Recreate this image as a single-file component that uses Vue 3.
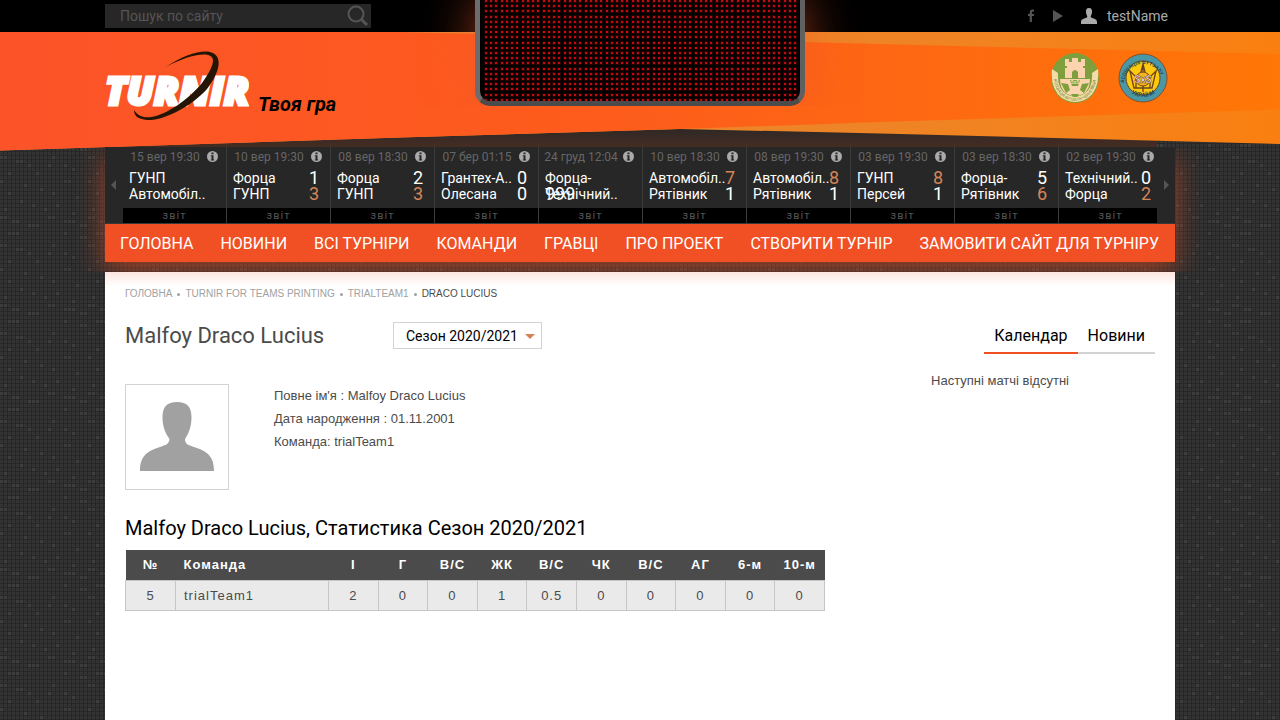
<script setup>
import { ref } from 'vue'

const query = ref('')
const season = ref('Сезон 2020/2021')

const games = [
  { date: '15 вер 19:30', home: 'ГУНП', away: 'Автомобіл..', hs: '', as: '' },
  { date: '10 вер 19:30', home: 'Форца', away: 'ГУНП', hs: '1', as: '3', win: 'away' },
  { date: '08 вер 18:30', home: 'Форца', away: 'ГУНП', hs: '2', as: '3', win: 'away' },
  { date: '07 бер 01:15', home: 'Грантех-А..', away: 'Олесана', hs: '0', as: '0' },
  { date: '24 груд 12:04', home: 'Форца-', away: 'Технічний..', hs: '', as: '999', wide: true },
  { date: '10 вер 18:30', home: 'Автомобіл..', away: 'Рятівник', hs: '7', as: '1', win: 'home' },
  { date: '08 вер 19:30', home: 'Автомобіл..', away: 'Рятівник', hs: '8', as: '1', win: 'home' },
  { date: '03 вер 19:30', home: 'ГУНП', away: 'Персей', hs: '8', as: '1', win: 'home' },
  { date: '03 вер 18:30', home: 'Форца-', away: 'Рятівник', hs: '5', as: '6', win: 'away' },
  { date: '02 вер 19:30', home: 'Технічний..', away: 'Форца', hs: '0', as: '2', win: 'away' },
]

const menu = ['Головна', 'Новини', 'Всі турніри', 'Команди', 'Гравці', 'Про проект', 'Створити турнір', 'Замовити сайт для турніру']

const heads = ['№', 'Команда', 'І', 'Г', 'В/С', 'ЖК', 'В/С', 'ЧК', 'В/С', 'АГ', '6-м', '10-м']
const row = ['5', 'trialTeam1', '2', '0', '0', '1', '0.5', '0', '0', '0', '0', '0']

// LED board: 60 x 20 lamps, snapped to whole pixels
let lamps = ''
let halos = ''
for (let r = 0; r < 20; r++) {
  for (let c = 0; c < 60; c++) {
    const x = Math.round(5 + c * 5.24)
    const y = Math.round(r * 5.2)
    lamps += `M${x} ${y}h2v2h-2z`
    halos += `M${x - 1} ${y - 1}h4v4h-4z`
  }
}

// lighter cells of the background mesh, [column, row] on a 22 x 22 grid
const cells = [
  [0, 10], [1, 10], [12, 10], [13, 10], [3, 11], [4, 11], [16, 11], [17, 11], [18, 11],
  [7, 12], [8, 12], [9, 12], [20, 12], [21, 12], [2, 14], [3, 14], [4, 14], [16, 14],
  [20, 15], [21, 15], [0, 17], [1, 17], [13, 17], [4, 18], [5, 18], [7, 19], [12, 19],
  [16, 19], [18, 20], [2, 21], [9, 21], [16, 1], [17, 1], [0, 1], [6, 2], [10, 3],
  [2, 4], [13, 4], [19, 5], [5, 6], [8, 7], [14, 7], [1, 8], [11, 8], [18, 9],
]
</script>

<template>
  <div class="page">
    <svg class="mesh" aria-hidden="true">
      <defs>
        <pattern id="mesh" width="88" height="88" patternUnits="userSpaceOnUse">
          <rect width="88" height="88" fill="#272727" />
          <template v-for="r in 22" :key="r">
            <rect v-for="c in 22" :key="c" :x="(c - 1) * 4" :y="(r - 1) * 4" width="3" height="3" fill="#333" />
          </template>
          <rect v-for="(p, i) in cells" :key="'l' + i" :x="p[0] * 4" :y="p[1] * 4" width="3" height="3" fill="#3d3d3d" />
        </pattern>
      </defs>
      <rect width="100%" height="100%" fill="url(#mesh)" />
    </svg>

    <div class="topbar">
      <div class="wrap top-row">
        <form class="search" @submit.prevent>
          <input v-model="query" type="text" placeholder="Пошук по сайту" aria-label="Пошук по сайту" />
          <button type="submit" aria-label="Шукати">
            <svg width="22" height="22" viewBox="0 0 22 22">
              <circle cx="9" cy="9" r="7.5" fill="none" stroke="#555" stroke-width="2" />
              <path d="M14.5 14.5L20 20" stroke="#555" stroke-width="3" />
            </svg>
          </button>
        </form>
        <nav class="account">
          <a href="#" aria-label="Facebook">
            <svg width="8" height="14" viewBox="0 0 8 14"><path d="M7 1.5H5.6Q3.8 1.5 3.8 3.6V13M1 6H7" fill="none" stroke="#555" stroke-width="2.2" /></svg>
          </a>
          <a href="#" aria-label="YouTube">
            <svg width="10" height="12" viewBox="0 0 10 12"><path d="M0 0L10 6L0 12Z" fill="#555" /></svg>
          </a>
          <a href="#" class="user">
            <svg width="16" height="16" viewBox="0 0 16 16"><path d="M8 0C10.600 0 11.300 1.800 11 4.500C10.800 6.500 9.700 7.800 9.700 9C10.800 10.500 16 10.200 16 14V16H0V14C0 10.200 5.200 10.500 6.300 9C6.300 7.800 5.200 6.500 5 4.500C4.700 1.800 5.400 0 8 0Z" fill="#aaa" /></svg>
            testName
          </a>
        </nav>
      </div>
    </div>

    <header class="header">
      <svg class="ribbon" viewBox="0 0 1280 119" preserveAspectRatio="none" aria-hidden="true">
        <defs>
          <linearGradient id="hot"><stop offset="0" stop-color="#fc5329" /><stop offset=".5" stop-color="#fd5d1b" /><stop offset="1" stop-color="#ff7706" /></linearGradient>
          <linearGradient id="amber"><stop offset=".3" stop-color="#e98632" /><stop offset=".68" stop-color="#ee8426" /><stop offset="1" stop-color="#fa7f10" /></linearGradient>
          <linearGradient id="shade" x2="0" y2="1"><stop offset="0" stop-color="#272626" /><stop offset=".4" stop-color="#342925" /><stop offset="1" stop-color="#462c23" /></linearGradient>
        </defs>
        <path d="M105 92H1157V115H105Z" fill="url(#shade)" />
        <path d="M0 0H1280V112L880 101.500L680 97L400 105.500L0 118.500Z" fill="url(#amber)" />
        <path d="M0 0H400L1280 22V77.500L880 90L680 97L400 105.500L0 118.500Z" fill="url(#hot)" />
      </svg>
      <div class="wrap head-row">
        <a class="brand" href="#" aria-label="Turnir">
          <svg width="144" height="72" viewBox="0 0 144 72">
            <text class="brand-name" x="0" y="55">TURNIR</text>
            <path d="M61 17C77 6 95 0 105 2C118 5 116 21 102 39C86 57 58 71 42 70C33 69 29 66 29 60C33 66 38 68 46 67C61 65 83 50 97 33C108 18 112 7 103 5C93 3 76 9 61 17Z" fill="#241505" />
          </svg>
        </a>
        <span class="slogan">Твоя гра</span>
        <div class="partners">
          <a href="#" aria-label="Федерація футзалу">
            <svg width="50" height="52" viewBox="0 0 50 52">
              <ellipse cx="25" cy="26" rx="24" ry="25" fill="#7f9f3c" />
              <path d="M15 7H19V10H22V6H28V10H31V7H35V14H33V16H35V26H28V20Q25 16 22 20V26H15V16H17V14H15Z" fill="#fbd3ae" />
              <path d="M2 17L8 21Q7 36 16 42Q25 47 34 42Q43 36 42 21L48 17Q50 37 38 46Q25 54 12 46Q0 37 2 17Z" fill="#f4dca8" />
              <path d="M10 27H40Q40 38 33 42Q25 46 17 42Q10 38 10 27Z" fill="#fbd3ae" />
              <path d="M20 28H30L28 34H22ZM11 31L18 32L20 38L16 41ZM39 31L32 32L30 38L34 41ZM21 42L29 42L27 45H23Z" fill="#7f9f3c" />
              <path id="green-arc" d="M4 27Q7 48 25 49Q43 48 46 27" fill="none" />
              <text font-size="4" fill="#6b8630"><textPath href="#green-arc">АСОЦІАЦІЯ ФУТЗАЛУ ЧЕРНІГІВЩИНИ</textPath></text>
              <text x="25" y="32" font-size="5" font-weight="bold" text-anchor="middle" fill="#f4dca8">5x5</text>
            </svg>
          </a>
          <a href="#" aria-label="Асоціація футзалу України">
            <svg width="50" height="52" viewBox="0 0 50 52">
              <circle cx="25" cy="26" r="24" fill="#4a97a5" stroke="#80502f" />
              <circle cx="25" cy="26" r="17" fill="#ffc90e" stroke="#6b4320" />
              <path d="M12 19L16 36H34L38 19L29 28L25 12L21 28ZM25 12V40M18 27V36M32 27V36" fill="none" stroke="#6b4320" stroke-width="1.300" />
              <circle cx="25" cy="27" r="7" fill="#f4b61a" stroke="#6b4320" />
              <path id="blue-top" d="M6 31A19 19 0 1 1 44 31" fill="none" />
              <path id="blue-low" d="M8 37A22 22 0 0 0 42 37" fill="none" />
              <text font-size="5" font-weight="bold" fill="#2c4651"><textPath href="#blue-top">АСОЦІАЦІЯ  ФУТЗАЛУ</textPath></text>
              <text font-size="6" font-weight="bold" text-anchor="middle" fill="#2c4651"><textPath href="#blue-low" startOffset="50%">УКРАЇНИ</textPath></text>
              <text x="25" y="31" font-size="10" font-weight="bold" text-anchor="middle" fill="#fff" stroke="#6b2a20" stroke-width=".5">SxS</text>
            </svg>
          </a>
        </div>
      </div>
    </header>

    <div class="board">
      <svg viewBox="0 0 320 101" width="320" height="101" aria-hidden="true">
        <path :d="halos" fill="#250000" />
        <path :d="lamps" fill="#c60b10" />
      </svg>
    </div>

    <div class="wrap deck">
      <section class="ticker" aria-label="Матчі">
        <button class="arrow" type="button" aria-label="Назад">
          <svg width="6" height="10" viewBox="0 0 6 10"><path d="M5 0V10L0 5Z" fill="#555" /></svg>
        </button>
        <div class="games">
          <article v-for="(g, i) in games" :key="i" class="game">
            <div class="when">
              <time>{{ g.date }}</time>
              <svg width="11" height="11" viewBox="0 0 11 11"><circle cx="5.500" cy="5.500" r="5.500" fill="#aaa" /><path d="M4.500 1.500H6.500V3.200H4.500ZM3.800 4.300H6.500V8.500H7.200V9.500H3.800V8.500H4.500V5.300H3.800Z" fill="#272727" /></svg>
            </div>
            <div class="side"><span>{{ g.home }}</span><b :class="{ win: g.win === 'home' }">{{ g.hs }}</b></div>
            <div class="side"><span>{{ g.away }}</span><b :class="{ win: g.win === 'away', wide: g.wide }">{{ g.as }}</b></div>
            <a class="report" href="#">звіт</a>
          </article>
        </div>
        <button class="arrow" type="button" aria-label="Вперед">
          <svg width="6" height="10" viewBox="0 0 6 10"><path d="M1 0V10L6 5Z" fill="#555" /></svg>
        </button>
      </section>
      <nav class="menu"><a v-for="m in menu" :key="m" href="#">{{ m }}</a></nav>
    </div>

    <main class="wrap content">
      <nav class="crumbs" aria-label="Навігація">
        <a href="#">Головна</a><i></i><a href="#">Turnir for teams printing</a><i></i><a href="#">trialTeam1</a><i></i><span>Draco Lucius</span>
      </nav>
      <div class="columns">
        <div class="main-col">
          <div class="title-row">
            <h1>Malfoy Draco Lucius</h1>
            <div class="season">
              <select v-model="season" aria-label="Сезон">
                <option>Сезон 2020/2021</option>
              </select>
              <svg width="10" height="5" viewBox="0 0 10 5"><path d="M0 0H10L5 5Z" fill="#d38155" /></svg>
            </div>
          </div>
          <div class="profile">
            <div class="photo">
              <svg width="74" height="70" viewBox="0 0 74 70">
                <path d="M37 0C47 0 51.500 5 51.500 15C51.500 26 48 32 45 37C45 42 48 43 54 45C66 49 74 53 74 69H0C0 53 8 49 20 45C26 43 29 42 29.500 37C26 32 22.500 26 22.500 15C22.500 5 27 0 37 0Z" fill="#a1a1a1" />
              </svg>
            </div>
            <div class="facts">
              <p>Повне ім'я : Malfoy Draco Lucius</p>
              <p>Дата народження : 01.11.2001</p>
              <p>Команда: trialTeam1</p>
            </div>
          </div>
          <h2>Malfoy Draco Lucius, Статистика Сезон 2020/2021</h2>
          <table>
            <colgroup><col class="c-num" /><col class="c-team" /><col v-for="n in 10" :key="n" /></colgroup>
            <thead><tr><th v-for="(h, i) in heads" :key="i" scope="col">{{ h }}</th></tr></thead>
            <tbody><tr><td v-for="(v, i) in row" :key="i">{{ v }}</td></tr></tbody>
          </table>
        </div>
        <aside>
          <div class="tabs">
            <button class="on" type="button">Календар</button><button type="button">Новини</button>
          </div>
          <p>Наступні матчі відсутні</p>
        </aside>
      </div>
    </main>
  </div>
</template>

<style>
body {
  background: #2b2b2b;
}
</style>

<style scoped>
* {
  box-sizing: border-box;
}
.page {
  position: relative;
  display: flex;
  flex-direction: column;
  min-height: 100vh;
  overflow: hidden;
  font-family: 'Liberation Sans', Arial, sans-serif;
  font-size: 13px;
  color: #4b4b4b;
}
a {
  color: inherit;
  text-decoration: none;
}
h1, h2, p {
  margin: 0;
}
button, input, select {
  margin: 0;
  padding: 0;
  border: 0;
  border-radius: 0;
  background: none;
  font: inherit;
}
svg {
  display: block;
}
.mesh {
  position: absolute;
  inset: 0;
  width: 100%;
  height: 100%;
}
.wrap {
  width: 100%;
  max-width: 1070px;
  margin: 0 auto;
}
.topbar, .header, .board, .deck, .menu, h1, h2, .season, .tabs {
  font-family: Roboto, 'Open Sans', sans-serif;
}

.topbar {
  position: relative;
  height: 32px;
  background: #000;
}
.top-row {
  display: flex;
  align-items: center;
  justify-content: space-between;
  height: 32px;
  padding-right: 7px;
}
.search {
  display: flex;
  align-items: center;
  width: 266px;
  height: 24px;
  padding-right: 2px;
  background: #272727;
}
.search input {
  flex: 1;
  min-width: 0;
  padding-left: 15px;
  font-size: 14px;
  color: #aaa;
  outline: none;
}
.search input::placeholder {
  color: #555;
  opacity: 1;
}
.account {
  display: flex;
  align-items: center;
  gap: 18px;
  font-size: 14px;
  color: #aaa;
}
.user {
  display: flex;
  align-items: center;
  gap: 10px;
}

.header {
  position: relative;
  height: 115px;
}
.ribbon {
  position: absolute;
  top: 0;
  left: 0;
  width: 100%;
  height: 119px;
}
.head-row {
  position: relative;
  display: flex;
  align-items: flex-start;
  padding: 18px 7px 0 0;
}
.brand-name {
  font-family: 'Liberation Sans Narrow', 'Open Sans', sans-serif;
  font-size: 39px;
  font-weight: 800;
  font-style: italic;
  fill: #fff;
  stroke: #fff;
  stroke-width: 3px;
}
.slogan {
  margin: 42px 0 0 9px;
  font-size: 20px;
  line-height: 24px;
  font-weight: 700;
  font-style: italic;
  color: #000;
}
.partners {
  display: flex;
  gap: 18px;
  margin: 2px 0 0 auto;
}

.board {
  position: absolute;
  top: 0;
  left: 50%;
  width: 330px;
  height: 106px;
  margin-left: -165px;
  border: solid #555;
  border-width: 0 5px 5px;
  border-color: #6c6c6c #606060 #4b4b4b #6c6c6c;
  border-radius: 0 0 15px 15px;
  background: #000;
  overflow: hidden;
  box-shadow: 0 0 50px rgba(240, 88, 40, 0.6);
  clip-path: inset(0 -60px 0 -60px);
}

.deck {
  position: relative;
  box-shadow: 0 10px 26px rgba(238, 80, 35, 0.55);
  clip-path: inset(0 -50px -10px -50px);
}
.ticker {
  display: flex;
  height: 77px;
  border-bottom: 1px solid #383838;
  background: #272727;
}
.arrow {
  display: flex;
  flex: 0 0 18px;
  align-items: center;
  justify-content: center;
}
.games {
  display: flex;
  flex: 1;
  min-width: 0;
  overflow: hidden;
}
.game {
  display: flex;
  flex: 0 0 104px;
  flex-direction: column;
  border-right: 1px solid #3b3b3b;
}
.when {
  display: flex;
  align-items: center;
  height: 19px;
  margin-bottom: 4px;
  font-size: 12px;
  color: #666;
}
.when time {
  flex: 0 0 84px;
  white-space: nowrap;
  text-align: center;
}
.side {
  position: relative;
  height: 16px;
  padding-left: 6px;
  font-size: 14px;
  line-height: 16px;
  color: #fff;
  white-space: nowrap;
}
.side b {
  position: absolute;
  top: 0;
  right: 11px;
  font-size: 18px;
  font-weight: 400;
}
.side b.win {
  color: #d5855a;
}
.side b.wide {
  right: auto;
  left: 6px;
}
.report {
  height: 15px;
  margin-top: auto;
  background: #000;
  font-size: 11px;
  line-height: 15px;
  letter-spacing: 1px;
  text-align: center;
  color: #555;
}
.side + .side {
  margin-bottom: 6px;
}
.menu {
  display: flex;
  align-items: center;
  justify-content: space-between;
  height: 38px;
  padding: 0 16px 0 15px;
  background: #f15024;
  font-size: 16px;
  text-transform: uppercase;
  white-space: nowrap;
  color: #fff;
}

.content {
  position: relative;
  flex: 1;
  margin-top: 10px;
  padding: 15px 20px 20px;
  background: linear-gradient(#fde5df, #fff 14px);
}
.crumbs {
  display: flex;
  align-items: center;
  font-size: 10px;
  line-height: 14px;
  text-transform: uppercase;
  color: #a1a1a1;
}
.crumbs i {
  width: 3px;
  height: 3px;
  margin: 0 5px;
  border-radius: 50%;
  background: #a1a1a1;
}
.crumbs span {
  color: #4b4b4b;
}
.columns {
  display: grid;
  grid-template-columns: 700fr 310fr;
  gap: 20px;
  padding-top: 17px;
}
.title-row {
  display: flex;
  align-items: center;
  height: 35px;
}
h1 {
  width: 268px;
  font-size: 22px;
  font-weight: 400;
}
.season {
  position: relative;
  width: 149px;
}
.season select {
  width: 100%;
  height: 27px;
  padding-left: 12px;
  border: 1px solid #d3d3d3;
  appearance: none;
  font-size: 14px;
  color: #000;
}
.season svg {
  position: absolute;
  top: 12px;
  right: 7px;
  pointer-events: none;
}
.profile {
  display: flex;
  gap: 45px;
  padding-top: 31px;
}
.photo {
  width: 104px;
  height: 106px;
  padding: 17px 14px;
  border: 1px solid #d3d3d3;
}
.facts {
  line-height: 23px;
}
h2 {
  margin: 26px 0 10px;
  font-size: 20px;
  line-height: 24px;
  font-weight: 400;
  color: #000;
}
table {
  width: 100%;
  table-layout: fixed;
  border-collapse: collapse;
  letter-spacing: 1px;
  text-align: center;
}
.c-num {
  width: 50px;
}
.c-team {
  width: 153px;
}
th {
  height: 30px;
  padding: 0;
  background: #4b4b4b;
  color: #fff;
}
td {
  height: 30px;
  padding: 0;
  border: 1px solid #c6c6c6;
  background: #eaeaea;
}
th:nth-child(2), td:nth-child(2) {
  padding-left: 8px;
  text-align: left;
}
aside {
  display: flex;
  flex-direction: column;
  align-items: flex-end;
}
.tabs {
  display: flex;
}
.tabs button {
  height: 36px;
  padding: 0 10px;
  border-bottom: 2px solid #d3d3d3;
  font-size: 16px;
  color: #000;
}
.tabs button.on {
  border-color: #f15024;
}
aside p {
  width: 100%;
  margin-top: 18px;
  line-height: 18px;
  text-align: center;
}
</style>
